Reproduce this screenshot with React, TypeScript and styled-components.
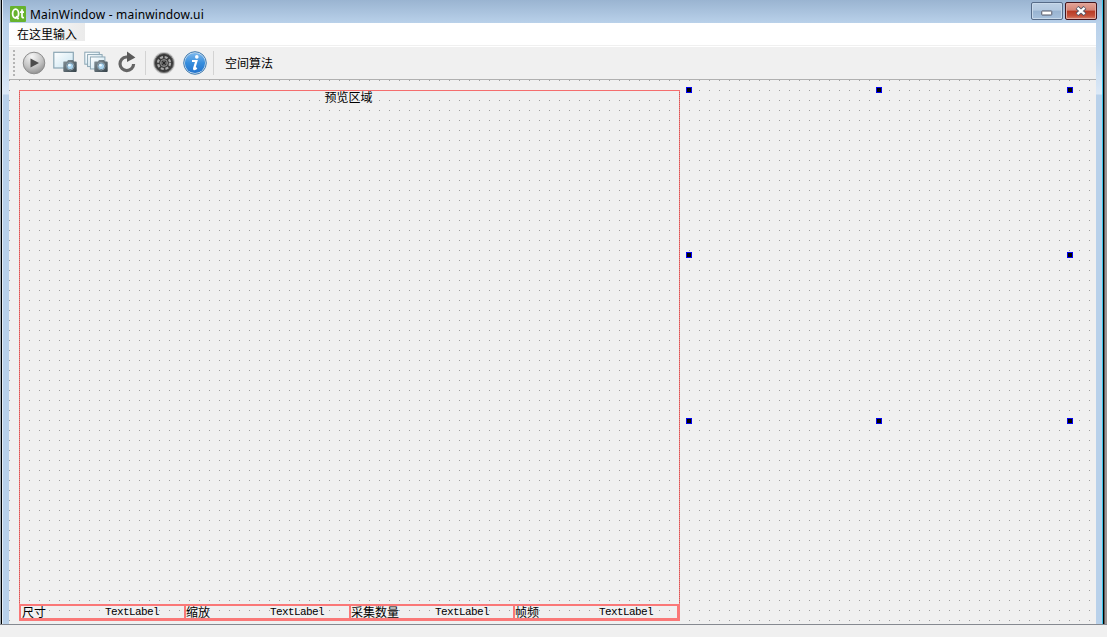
import React from 'react';
import styled, { createGlobalStyle } from 'styled-components';

const Global = createGlobalStyle`
  * { box-sizing: border-box; }
  body { margin: 0; overflow: hidden; background: #f0f0f0; color: #000;
    font: 12px/14px "Liberation Sans", "Noto Sans CJK SC", sans-serif; }
`;

const Shell = styled.div`
  width: 1107px; height: 637px; background: #f0f0f0;
  display: flex; flex-direction: column; overflow: hidden;
`;
const Workspace = styled.div`
  height: 625px; flex: none; display: flex; border-bottom: 1px solid #858990;
`;
const LeftEdge = styled.div`
  width: 3px; flex: none;
  background: linear-gradient(90deg, #a3abb0 0 1px, #000 1px 2px, #e4edf6 2px 3px);
`;
const RightEdge = styled.div`
  width: 5px; flex: none;
  background: linear-gradient(90deg, #37c4e8 0 1px, #000 1px 2px, #5c5858 2px 3px, #9d9896 3px 5px);
`;
const Window = styled.div`
  flex: 1; display: flex; flex-direction: column; padding: 0 6px;
  background: linear-gradient(#9ab4d1 0, #b9d1ea 23px, #c5daef 60px, #dce9f7 94px, #b9d1ea 95px);
`;
const TitleBar = styled.header`
  height: 23px; flex: none; display: flex; margin: 0 -6px; padding-left: 7px;
`;
const Logo = styled.svg`margin-top: 6px; flex: none;`;
const Title = styled.div`
  flex: 1; padding: 7px 0 0 4px; font: 12px/16px "Noto Sans", "Open Sans", sans-serif; white-space: pre;
  letter-spacing: 0.18px;
`;
const Caption = styled.div`display: flex; gap: 2px; padding: 2px 5px 0 0;`;
const CaptionButton = styled.button<{ $close?: boolean }>`
  width: 32px; height: 18px; padding: 0; display: grid; place-items: center; border-radius: 2px;
  border: 1px solid ${p => (p.$close ? '#43141b' : '#566b87')};
  box-shadow: inset 0 0 0 1px ${p => (p.$close ? '#e0a89e' : '#c8d9ea')};
  background: ${p => (p.$close
    ? 'linear-gradient(#e3a497 0, #d48577 45%, #b83a24 50%, #c4513a 80%, #d9836c 100%)'
    : 'linear-gradient(#bdd0e4 0, #b2c8df 45%, #98b3d0 50%, #a7c1dc 100%)')};
  svg { margin-top: ${p => (p.$close ? 0 : 3)}px; }
`;
const MenuBar = styled.nav`
  height: 22px; flex: none; background: #fff; display: flex;
`;
const MenuEntry = styled.div`
  width: 76px; padding: 4px 0 0 8px; height: 18px; line-height: 14px;
  background: linear-gradient(90deg, #fff, #ebebeb);
  font-family: "Noto Sans CJK SC", sans-serif;
`;
const ToolBar = styled.div`
  height: 35px; flex: none; display: flex; align-items: center; background: #f0f0f0;
  border-top: 1px solid #f0f0f0; border-bottom: 1px solid #b0b0b0; box-shadow: inset 0 1px #fff;
`;
const Grip = styled.div`
  width: 2px; height: 26px; margin: 0 7px 0 4px;
  background: repeating-linear-gradient(#b4b4b4 0 2px, transparent 2px 4px);
`;
const Tool = styled.span<{ $gap?: number }>`
  width: 24px; height: 24px; margin-right: ${p => p.$gap ?? 7}px; flex: none; display: block;
  svg { display: block; }
`;
const Separator = styled.div<{ $after: number }>`
  width: 1px; height: 24px; background: #d3d3d3; margin-right: ${p => p.$after}px;
`;
const ToolText = styled.span`font-family: "Noto Sans CJK SC", sans-serif; line-height: 14px;`;
const Canvas = styled.main`
  flex: 1; display: flex; align-items: flex-start; padding: 10px 0 0 10px;
  background-color: #f0f0f0;
  background-image: conic-gradient(from 270deg at 1px 1px, #a0a0a0 90deg, transparent 0);
  background-size: 10px 10px;
`;
const Preview = styled.section`
  width: 661px; height: 531px; display: flex; flex-direction: column; justify-content: space-between;
  background:
    linear-gradient(#f56e6e, #f56e6e) 0 0 / 100% 1px no-repeat,
    repeating-linear-gradient(#d05a5a 0 1px, #f58080 1px 2px) 0 0 / 1px 100% no-repeat,
    repeating-linear-gradient(#d05a5a 0 1px, #f58080 1px 2px) 100% 0 / 1px 100% no-repeat;
`;
const PreviewTitle = styled.div`
  text-align: center; line-height: 14px; padding-right: 2px;
  font-family: "Noto Sans CJK SC", sans-serif;
`;
const StatusRow = styled.div`
  height: 17px; display: grid; grid-template-columns: 165px 165px 164px 1fr;
  border: solid #fa7878; border-width: 2px 3px 3px 2px;
`;
const StatusCell = styled.div`
  display: grid; grid-template-columns: 83px 1fr; padding-left: 1px; height: 12px; line-height: 12px;
  font-family: "Noto Sans CJK SC", sans-serif; white-space: nowrap;
  & + & { border-left: 2px solid #fa7878; margin-left: -2px; padding-left: 0; grid-template-columns: 84px 1fr; }
`;
const Value = styled.span`
  font: 11px/13px "Liberation Mono", monospace; letter-spacing: -0.6px;
`;
const Selection = styled.div`
  display: grid; grid-template-columns: 190px 191px 6px; grid-template-rows: 165px 166px 6px;
  margin: -3px 0 0 6px;
`;
const Handle = styled.i<{ $col: number; $row: number }>`
  grid-column: ${p => p.$col}; grid-row: ${p => p.$row};
  width: 6px; height: 6px; background: #000; border: 1px solid #0000f0;
`;

const QtLogo = () => (
  <Logo width="16" height="16" viewBox="0 0 16 16">
    <rect width="16" height="16" rx="1" fill="#67b32e" />
    <ellipse cx="5.6" cy="7.6" rx="3" ry="4.4" fill="none" stroke="#fff" strokeWidth="1.8" />
    <path d="M6.3 10l2.2 3.3M12 3.3v7q0 1.7 2 1.2M10 6.2h4" fill="none" stroke="#fff" strokeWidth="1.7" />
  </Logo>
);

const PlayIcon = () => (
  <svg width="24" height="24" viewBox="0 0 24 24">
    <defs>
      <radialGradient id="play" cx=".4" cy=".2" r=".85">
        <stop offset="0" stopColor="#f6f6f6" /><stop offset=".6" stopColor="#c2c2c2" /><stop offset="1" stopColor="#8b8b8b" />
      </radialGradient>
    </defs>
    <circle cx="12" cy="12" r="10.8" fill="url(#play)" stroke="#8c8c8c" />
    <path d="M8.5 7.5l8.5 4.5-8.5 4.5z" fill="#4b4b4b" />
  </svg>
);

const CameraBody = () => (
  <g>
    <path d="M10.7 10.5h3.3l1-1.5h5l1 1.5h1.9q.8 0 .8.8v8.6q0 1-1 1h-11.4q-1 0-1-1v-8.6q0-.8.4-.8z" fill="url(#cam)" />
    <circle cx="17.2" cy="15.2" r="3.8" fill="#465c6b" stroke="#9fb0ba" strokeWidth=".8" />
    <circle cx="17.2" cy="15.2" r="2.9" fill="#a9d4ef" />
    <circle cx="16.5" cy="14.2" r="1.3" fill="#eef9ff" />
  </g>
);

const Gradients = () => (
  <defs>
    <linearGradient id="cam" x2="1" y2="1"><stop stopColor="#87949b" /><stop offset="1" stopColor="#344148" /></linearGradient>
    <linearGradient id="glass" x2="1" y2="1"><stop stopColor="#fff" /><stop offset="1" stopColor="#c7e3f0" /></linearGradient>
  </defs>
);

const SnapshotIcon = () => (
  <svg width="24" height="24" viewBox="0 0 24 24">
    <Gradients />
    <rect x=".8" y="1.3" width="19.5" height="15.7" fill="url(#glass)" stroke="#8ba6b4" strokeWidth="1.2" />
    <CameraBody />
  </svg>
);

const BurstIcon = () => (
  <svg width="24" height="24" viewBox="0 0 24 24">
    {[0, 2.8, 5.6].map(n => (
      <rect key={n} x={0.8 + n} y={1.2 + n * 0.85} width="14.5" height="12" fill="url(#glass)" stroke="#8ba6b4" />
    ))}
    <CameraBody />
  </svg>
);

const ReloadIcon = () => (
  <svg width="24" height="24" viewBox="0 0 24 24">
    <path d="M14 6H11.3A6.8 6.8 0 1 0 18.6 13" fill="none" stroke="#656565" strokeWidth="3.2" />
    <path d="M12 .6l8.4 5.8-8.4 4.6z" fill="#5a5a5a" />
  </svg>
);

const GearIcon = () => (
  <svg width="24" height="24" viewBox="0 0 24 24">
    <circle cx="12" cy="12" r="11" fill="#c8c8c8" />
    <circle cx="12" cy="12" r="9.6" fill="#3b3b3b" stroke="#757575" />
    <circle cx="12" cy="12" r="6" fill="none" stroke="#aaa" strokeWidth="2.2" strokeDasharray="3 1.71" />
    <circle cx="12" cy="12" r="3.4" fill="#343434" stroke="#999" strokeWidth="1" />
    <path d="M12 8.8v6.4M8.8 12h6.4" stroke="#8c8c8c" />
    <circle cx="12" cy="12" r="1.2" fill="#222" />
  </svg>
);

const InfoIcon = () => (
  <svg width="24" height="24" viewBox="0 0 24 24">
    <defs>
      <linearGradient id="info" x2="0" y2="1"><stop stopColor="#7db8ed" /><stop offset=".5" stopColor="#368ddd" /><stop offset="1" stopColor="#2273cd" /></linearGradient>
    </defs>
    <circle cx="12" cy="12" r="11.3" fill="#c9def0" stroke="#3f79ad" />
    <circle cx="12" cy="12" r="10.1" fill="url(#info)" />
    <circle cx="13.8" cy="5.9" r="1.8" fill="#fff" />
    <path d="M9 10h4.4l-2.3 7.6q-.2 1.2 2.6-.8" fill="none" stroke="#fff" strokeWidth="2.2" />
  </svg>
);

const cells = ['尺寸', '缩放', '采集数量', '帧频'];

export default function App() {
  return (
    <Shell>
      <Global />
      <Workspace>
        <LeftEdge />
        <Window>
          <TitleBar>
            <QtLogo />
            <Title>MainWindow - mainwindow.ui</Title>
            <Caption>
              <CaptionButton aria-label="Minimize">
                <svg width="12" height="6" viewBox="0 0 12 6"><rect x=".75" y="1" width="10" height="4" rx=".5" fill="#fff" stroke="#535666" /></svg>
              </CaptionButton>
              <CaptionButton $close aria-label="Close">
                <svg width="12" height="10" viewBox="0 0 12 10">
                  <path d="M2 1.5l8 7M10 1.5l-8 7" stroke="#535666" strokeWidth="4.2" />
                  <path d="M2.4 1.8l7.2 6.4M9.6 1.8L2.4 8.2" stroke="#fff" strokeWidth="2.3" />
                </svg>
              </CaptionButton>
            </Caption>
          </TitleBar>
          <MenuBar><MenuEntry>在这里输入</MenuEntry></MenuBar>
          <ToolBar>
            <Grip />
            <Tool><PlayIcon /></Tool>
            <Tool><SnapshotIcon /></Tool>
            <Tool><BurstIcon /></Tool>
            <Tool $gap={6}><ReloadIcon /></Tool>
            <Separator $after={6} />
            <Tool><GearIcon /></Tool>
            <Tool $gap={6}><InfoIcon /></Tool>
            <Separator $after={11} />
            <ToolText>空间算法</ToolText>
          </ToolBar>
          <Canvas>
            <Preview>
              <PreviewTitle>预览区域</PreviewTitle>
              <StatusRow>
                {cells.map(name => (
                  <StatusCell key={name}><span>{name}</span><Value>TextLabel</Value></StatusCell>
                ))}
              </StatusRow>
            </Preview>
            <Selection>
              {[1, 2, 3].flatMap(row => [1, 2, 3].filter(col => row !== 2 || col !== 2).map(col => (
                <Handle key={`${row}-${col}`} $col={col} $row={row} />
              )))}
            </Selection>
          </Canvas>
        </Window>
        <RightEdge />
      </Workspace>
    </Shell>
  );
}
